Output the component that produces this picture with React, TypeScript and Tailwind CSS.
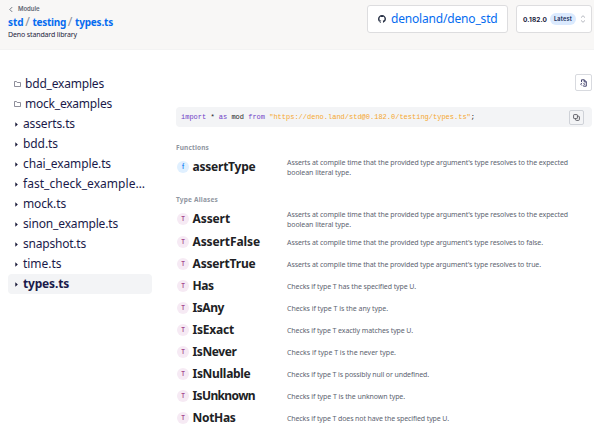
import { useLayoutEffect, useRef, useState } from "react";

/** A single line of text whose tracking is adjusted to fill the given width. */
function Label({ text, width, className = "" }: { text: string; width: number; className?: string }) {
  const ref = useRef<HTMLSpanElement>(null);
  const [spacing, setSpacing] = useState(0);
  useLayoutEffect(() => {
    if (!ref.current) return;
    const natural = ref.current.getBoundingClientRect().width - spacing * text.length;
    setSpacing((width - natural) / text.length);
  }, [text, width]);
  return (
    <span ref={ref} className={`inline-block shrink-0 whitespace-pre ${className}`} style={{ letterSpacing: `${spacing}px` }}>
      {text}
    </span>
  );
}

function Slash() {
  return <span className="w-[9px] pr-px text-center text-[12.5px] leading-4 font-normal text-[#8d929c]">/</span>;
}

const files = [
  { name: "bdd_examples", width: 79, folder: true },
  { name: "mock_examples", width: 87, folder: true },
  { name: "asserts.ts", width: 52 },
  { name: "bdd.ts", width: 35 },
  { name: "chai_example.ts", width: 88 },
  { name: "fast_check_example…", width: 122 },
  { name: "mock.ts", width: 43 },
  { name: "sinon_example.ts", width: 95 },
  { name: "snapshot.ts", width: 63 },
  { name: "time.ts", width: 38.5 },
  { name: "types.ts", width: 46, active: true },
];

type Doc = { name: string; width: number; lines: [string, number][] };

const expected: [string, number][] = [
  ["Asserts at compile time that the provided type argument's type resolves to the expected", 281],
  ["boolean literal type.", 64],
];

const aliases: Doc[] = [
  { name: "Assert", width: 37.5, lines: expected },
  { name: "AssertFalse", width: 67.5, lines: [["Asserts at compile time that the provided type argument's type resolves to false.", 256]] },
  { name: "AssertTrue", width: 63, lines: [["Asserts at compile time that the provided type argument's type resolves to true.", 254]] },
  { name: "Has", width: 21, lines: [["Checks if type T has the specified type U.", 129]] },
  { name: "IsAny", width: 31.5, lines: [["Checks if type T is the any type.", 101]] },
  { name: "IsExact", width: 41.5, lines: [["Checks if type T exactly matches type U.", 126]] },
  { name: "IsNever", width: 44, lines: [["Checks if type T is the never type.", 109]] },
  { name: "IsNullable", width: 58, lines: [["Checks if type T is possibly null or undefined.", 142]] },
  { name: "IsUnknown", width: 62.5, lines: [["Checks if type T is the unknown type.", 118]] },
  { name: "NotHas", width: 43, lines: [["Checks if type T does not have the specified type U.", 162]] },
];

function DocRow({ doc, kind }: { doc: Doc; kind: "f" | "T" }) {
  return (
    <div className={`flex items-center ${doc.lines.length > 1 ? "h-6" : "h-[22px]"}`}>
      <div className="flex w-[111px] shrink-0 items-center pl-px">
        <span
          className={`mr-[3.5px] flex size-3 shrink-0 items-center justify-center rounded-full font-['Inter',sans-serif] text-[5.5px] font-bold ${
            kind === "f" ? "bg-[#e0f0ff] text-[#2385f5]" : "bg-[#f6eaf4] text-[#a4478c]"
          }`}
        >
          {kind}
        </span>
        <Label text={doc.name} width={doc.width} className="text-[12px] leading-[18px] font-bold text-[#202124]" />
      </div>
      <div className="flex flex-col pt-px text-[7px] leading-[10px] text-[#5d6471]">
        {doc.lines.map(([text, width]) => (
          <Label key={text} text={text} width={width} className="self-start" />
        ))}
      </div>
    </div>
  );
}

export default function App() {
  return (
    <div className="h-[429px] w-[594px] overflow-hidden bg-white font-['Noto_Sans',sans-serif]">
      <header className="flex h-[50px] justify-between border-b border-[#f3f3f3] bg-[#f8f7f6] pr-[2px] pl-2">
        <div className="flex flex-col pt-1">
          <div className="flex h-[10px] items-center pl-px text-[#5f6673]">
            <svg viewBox="0 0 5 7" className="mr-[5px] h-[7px] w-1" fill="none" stroke="currentColor" strokeWidth="1.1">
              <path d="M4 .5 1 3.5 4 6.5" />
            </svg>
            <Label text="Module" width={21.5} className="font-['Inter',sans-serif] text-[6px] leading-[10px] font-semibold" />
          </div>
          <div className="flex h-4 items-center text-[10px] leading-4 font-bold text-[#056cf0]">
            <Label text="std" width={15.5} />
            <Slash />
            <Label text="testing" width={33.5} />
            <Slash />
            <Label text="types.ts" width={38} />
          </div>
          <div className="flex h-[9px] items-center text-[7px] leading-[9px] text-[#252540]">
            <Label text="Deno standard library" width={69} />
          </div>
        </div>
        <div className="flex gap-2 pt-[5px]">
          <div className="flex h-7 w-[141px] items-center rounded-[3px] border border-[#dddddf] bg-white pl-[10px]">
            <svg viewBox="0 0 16 16" className="mr-[5px] size-2 shrink-0" fill="#273044">
              <path d="M8 0C3.58 0 0 3.58 0 8c0 3.54 2.29 6.53 5.47 7.59.4.07.55-.17.55-.38 0-.19-.01-.82-.01-1.49-2.01.37-2.53-.49-2.69-.94-.09-.23-.48-.94-.82-1.13-.28-.15-.68-.52-.01-.53.63-.01 1.08.58 1.23.82.72 1.21 1.87.87 2.33.66.07-.52.28-.87.51-1.07-1.78-.2-3.64-.89-3.64-3.95 0-.87.31-1.59.82-2.15-.08-.2-.36-1.02.08-2.12 0 0 .67-.21 2.2.82A7.65 7.65 0 0 1 8 3.86c.68 0 1.36.09 2 .27 1.53-1.04 2.2-.82 2.2-.82.44 1.1.16 1.92.08 2.12.51.56.82 1.27.82 2.15 0 3.07-1.87 3.75-3.65 3.95.29.25.54.73.54 1.48 0 1.07-.01 1.93-.01 2.2 0 .21.15.46.55.38A8.01 8.01 0 0 0 16 8c0-4.42-3.58-8-8-8Z" />
            </svg>
            <Label text="denoland/deno_std" width={106.5} className="text-[12px] leading-5 text-[#056cf0]" />
          </div>
          <div className="flex h-7 w-[76px] items-center rounded-[3px] border border-[#dddddf] bg-white pl-[6px] font-['Inter',sans-serif]">
            <Label text="0.182.0" width={24} className="pt-px text-[6.5px] leading-3 font-bold text-[#17183b]" />
            <span className="ml-[3px] flex h-3 w-[26px] items-center justify-center rounded-full bg-[#dbeafe] text-[#26355f]">
              <Label text="Latest" width={18} className="text-[5.5px] leading-3 font-bold" />
            </span>
            <svg viewBox="0 0 6 8" className="ml-1 h-2 w-[6px]" fill="none" stroke="#a1a5ae" strokeWidth=".8">
              <path d="M1 2.6 3 .7l2 1.9M1 5.4l2 1.9 2-1.9" />
            </svg>
          </div>
        </div>
      </header>

      <div className="flex pt-6">
        <nav className="ml-2 w-36 shrink-0">
          {files.map((file) => (
            <div
              key={file.name}
              className={`flex h-5 items-center rounded ${file.folder ? "pl-[6px]" : "pl-[7px]"} ${file.active ? "bg-[#f3f4f6] font-bold" : ""}`}
            >
              {file.folder ? (
                <svg viewBox="0 0 7 6" className="mr-1 h-[6px] w-[7px] shrink-0" fill="none" stroke="#81818f" strokeWidth=".9">
                  <path d="M.5.5h2l.7 1h3.3v4h-6Z" />
                </svg>
              ) : (
                <svg viewBox="0 0 3 5" className="mt-px mr-[5px] h-[5px] w-[3px] shrink-0" fill="#171735">
                  <path d="M.3.3v4.4L2.8 2.5Z" />
                </svg>
              )}
              <Label text={file.name} width={file.width} className="text-[12px] leading-5 text-[#1a1a4a]" />
            </div>
          ))}
        </nav>

        <main className="ml-6 w-[416px] shrink-0">
          <div className="flex justify-end">
            <div className="flex size-[17px] items-center justify-center rounded-[2px] border border-[#d8dadf] bg-white text-[#343462]">
              <svg viewBox="0 0 7 8" className="h-2 w-[7px]" fill="none" stroke="currentColor" strokeWidth=".9">
                <path d="M1.5 3V.8h2.8l2 2v4.4h-3M4.2.8v2.1h2.1M1.9 3.9.7 5.2l1.2 1.3M3.4 3.9l1.2 1.3-1.2 1.3" />
              </svg>
            </div>
          </div>
          <div className="mt-4 flex h-5 items-center justify-between rounded bg-[#f3f4f6] pr-2 pl-[5px]">
            <div className="flex font-['Liberation_Mono',monospace] text-[7px] leading-[10px] text-[#222]">
              <Label text="import " width={29.4} className="text-[#7142c7]" />
              <Label text="* " width={8.4} />
              <Label text="as " width={12.6} className="text-[#7142c7]" />
              <Label text="mod " width={16.8} />
              <Label text="from " width={21} className="text-[#7142c7]" />
              <Label text={'"https://deno.land/std@0.182.0/testing/types.ts"'} width={201.6} className="text-[#f5a72e]" />
              <span>;</span>
            </div>
            <div className="flex size-[15px] items-center justify-center rounded-[2px] border border-[#cfd2d8] text-[#55555c]">
              <svg viewBox="0 0 7 7" className="size-[7px]" fill="none" stroke="currentColor" strokeWidth=".9">
                <rect x=".6" y=".6" width="3.8" height="4" rx=".6" />
                <path d="M4.4 2.2h1.1c.6 0 .9.3.9.8v2.5c0 .6-.3.9-.9.9H3.4c-.6 0-.9-.3-.9-.9v-.9" />
              </svg>
            </div>
          </div>

          <section className="pt-4">
            <h2 className="flex h-[10px] items-center text-[#9096a1]">
              <Label text="Functions" width={33} className="text-[6.5px] leading-[10px] font-bold" />
            </h2>
            <div className="pt-[2px]">
              <DocRow kind="f" doc={{ name: "assertType", width: 63, lines: expected }} />
            </div>
          </section>

          <section className="pt-4">
            <h2 className="flex h-[10px] items-center text-[#9096a1]">
              <Label text="Type Aliases" width={42} className="text-[6.5px] leading-[10px] font-bold" />
            </h2>
            <div className="pt-[2px]">
              {aliases.map((doc) => (
                <DocRow key={doc.name} kind="T" doc={doc} />
              ))}
            </div>
          </section>
        </main>
      </div>
    </div>
  );
}
